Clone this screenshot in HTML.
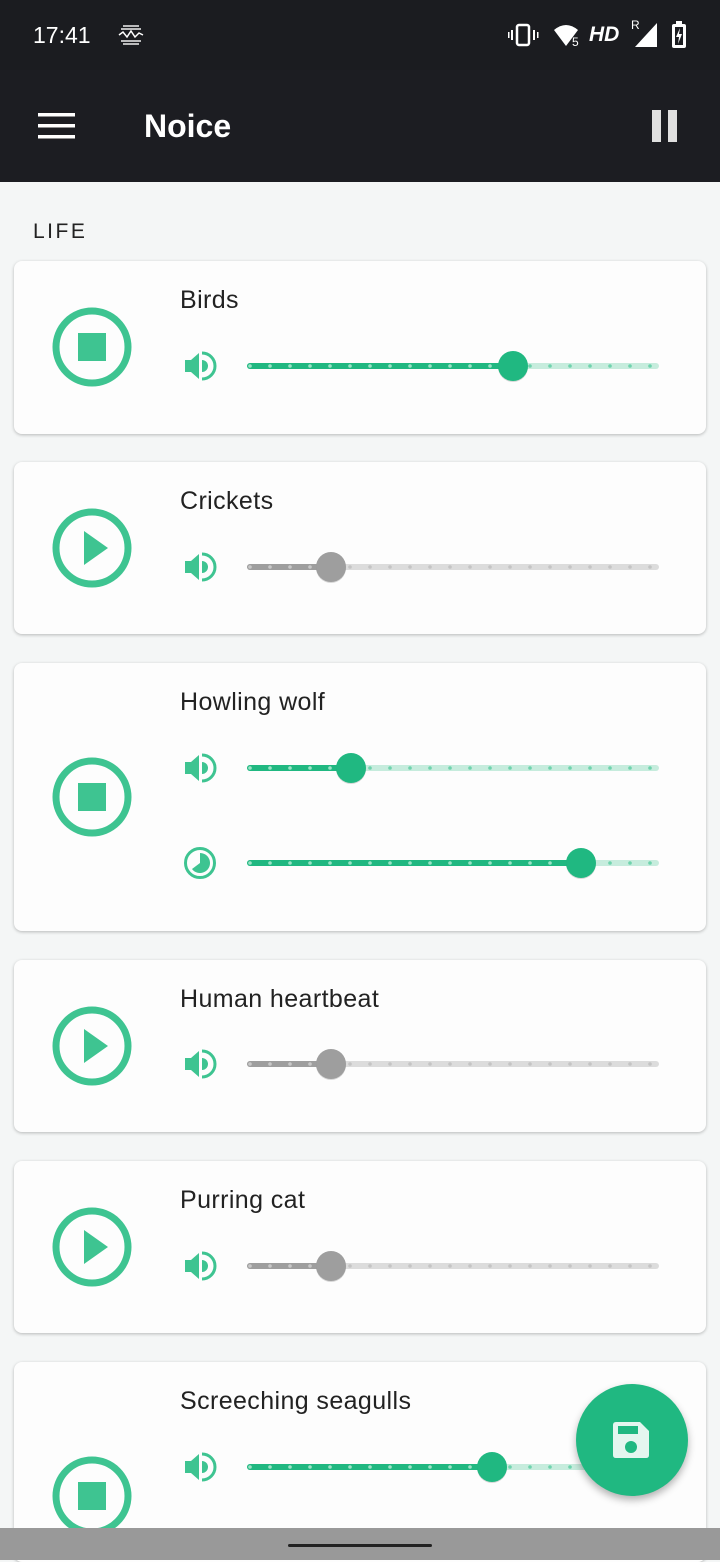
<!DOCTYPE html>
<html><head><meta charset="utf-8">
<style>
*{margin:0;padding:0;box-sizing:border-box}
body{width:720px;height:1560px;overflow:hidden;background:#f4f6f6;font-family:"Liberation Sans",sans-serif;position:relative}
.status{position:absolute;top:0;left:0;width:720px;height:70px;background:#1b1c20;color:#fff}
.bar{position:absolute;top:70px;left:0;width:720px;height:112px;background:#1c1d22;color:#fff}
.card{position:absolute;left:14px;width:692px;background:#fdfdfd;border-radius:8px;box-shadow:0 1px 3px rgba(0,0,0,.25)}
.title{position:absolute;left:166px;font-size:25px;letter-spacing:0.4px;color:#222}
svg{position:absolute;overflow:visible}
.nav{position:absolute;top:1528px;left:0;width:720px;height:32px;background:#999}
</style></head><body>
<div class="status">
  <div style="position:absolute;left:33px;top:22px;font-size:23px">17:41</div>
  <svg style="left:117px;top:22px" width="28" height="26"><g fill="none" stroke="#fff" stroke-width="1.5"><path d="M2 13 l4 -3 4 5 4 -6 4 6 4 -4 4 2"/></g><g fill="#fff"><rect x="6" y="3" width="16" height="2" opacity=".7"/><rect x="4" y="6" width="20" height="2" opacity=".7"/><rect x="4" y="18" width="20" height="2" opacity=".7"/><rect x="6" y="21" width="16" height="2" opacity=".7"/></g></svg>
  <svg style="left:508px;top:22px" width="32" height="26"><rect x="9" y="3" width="12" height="20" rx="2" fill="none" stroke="#fff" stroke-width="2.5"/><rect x="3" y="8" width="2" height="10" fill="#fff"/><rect x="25" y="8" width="2" height="10" fill="#fff"/><rect x="0" y="10" width="1.5" height="6" fill="#fff"/><rect x="29" y="10" width="1.5" height="6" fill="#fff"/></svg>
  <svg style="left:553px;top:22px" width="30" height="26"><path d="M1 8 Q13 -2 25 8 L13 24 Z" fill="#fff"/><text x="19" y="24" font-size="12" fill="#fff" font-family="Liberation Sans">5</text></svg>
  <div style="position:absolute;left:589px;top:23px;font-size:21px;font-weight:bold;font-style:italic">HD</div>
  <div style="position:absolute;left:631px;top:18px;font-size:12px">R</div>
  <svg style="left:634px;top:22px" width="24" height="26"><path d="M23 1 L23 25 L1 25 Z" fill="#fff"/></svg>
  <svg style="left:670px;top:20px" width="20" height="30"><rect x="6" y="1" width="6" height="4" fill="#fff"/><rect x="2" y="4" width="14" height="24" rx="2" fill="#fff"/><rect x="5" y="7" width="8" height="18" fill="#1b1c20"/><path d="M10 8 L6 17 H9 L8 24 L12 14 H9 Z" fill="#fff"/></svg>
</div>
<div class="bar">
  <svg style="left:38px;top:43px" width="37" height="26"><rect y="0" width="37" height="3.5" fill="#fff"/><rect y="11" width="37" height="3.5" fill="#fff"/><rect y="22" width="37" height="3.5" fill="#fff"/></svg>
  <div style="position:absolute;left:144px;top:38px;font-size:32px;font-weight:bold">Noice</div>
  <svg style="left:652px;top:40px" width="26" height="32"><rect x="0" y="0" width="9" height="32" fill="#e0e0e0"/><rect x="16" y="0" width="9" height="32" fill="#e0e0e0"/></svg>
</div>
<div style="position:absolute;left:33px;top:220px;font-size:21px;letter-spacing:2.5px;color:#222">LIFE</div>

<div class="card" style="top:261px;height:173px"></div>
<div class="card" style="top:462px;height:172px"></div>
<div class="card" style="top:663px;height:268px"></div>
<div class="card" style="top:960px;height:172px"></div>
<div class="card" style="top:1161px;height:172px"></div>
<div class="card" style="top:1362px;height:200px"></div>

<div class="title" style="top:286px;left:180px">Birds</div>
<div class="title" style="top:487px;left:180px">Crickets</div>
<div class="title" style="top:688px;left:180px">Howling wolf</div>
<div class="title" style="top:985px;left:180px">Human heartbeat</div>
<div class="title" style="top:1186px;left:180px">Purring cat</div>
<div class="title" style="top:1387px;left:180px">Screeching seagulls</div>

<div id="g"></div>
<div class="nav"><div style="position:absolute;left:288px;top:16px;width:144px;height:3px;border-radius:2px;background:#222"></div></div>
<div style="position:absolute;left:576px;top:1384px;width:112px;height:112px;border-radius:56px;background:#20b881;box-shadow:0 4px 8px rgba(0,0,0,.3)">
  <svg style="left:37px;top:38px" width="38" height="38"><path d="M3 0 H27 L36 9 V33 Q36 36 33 36 H3 Q0 36 0 33 V3 Q0 0 3 0 Z" fill="#e4f6ef"/><rect x="5" y="4" width="20" height="8" fill="#20b881"/><circle cx="18" cy="25" r="6" fill="#20b881"/></svg>
</div>
<script>
var G='#3ec491',D='#20b881';
var h='';
function btn(cy,stop){
  h+='<svg style="left:52px;top:'+(cy-40)+'px" width="80" height="80"><circle cx="40" cy="40" r="36" fill="none" stroke="'+G+'" stroke-width="7"/>'+
  (stop?'<rect x="26" y="26" width="28" height="28" fill="'+G+'"/>':'<path d="M32 23 L56 40 L32 57 Z" fill="'+G+'"/>')+'</svg>';
}
function vol(cy){
  h+='<svg style="left:183px;top:'+(cy-15)+'px" width="32" height="30"><path d="M2 9 H8 L16 2 V28 L8 21 H2 Z" fill="'+G+'"/><path d="M19 9 A6 6 0 0 1 19 21 Z" fill="'+G+'"/><path d="M19 2 A13 13 0 0 1 19 28" fill="none" stroke="'+G+'" stroke-width="3"/></svg>';
}
function timer(cy){
  h+='<svg style="left:183px;top:'+(cy-17)+'px" width="34" height="34"><circle cx="17" cy="17" r="14.5" fill="none" stroke="'+G+'" stroke-width="3"/><path d="M17 17 V7 A10 10 0 1 1 9 23 Z" fill="'+G+'"/></svg>';
}
function slider(cy,x,act){
  var c=act?D:'#9e9e9e',l=act?'#c6ecdd':'#dcdcdc',tk=act?'#6fd3ad':'#c4c4c4';
  var s='<svg style="left:246px;top:'+(cy-20)+'px" width="416" height="40">';
  s+='<line x1="4" y1="20" x2="410" y2="20" stroke="'+l+'" stroke-width="6" stroke-linecap="round"/>';
  s+='<line x1="4" y1="20" x2="'+(x-246)+'" y2="20" stroke="'+c+'" stroke-width="6" stroke-linecap="round"/>';
  for(var t=4;t<=410;t+=20){s+='<circle cx="'+t+'" cy="20" r="1.8" fill="'+(t<x-246?(act?'#9be3c6':'#c8c8c8'):tk)+'"/>';}
  s+='<circle cx="'+(x-246)+'" cy="21" r="15" fill="rgba(0,0,0,.15)"/><circle cx="'+(x-246)+'" cy="20" r="15" fill="'+c+'"/></svg>';
  h+=s;
}
btn(347,1);vol(366);slider(366,513,1);
btn(548,0);vol(567);slider(567,331,0);
btn(797,1);vol(768);slider(768,351,1);timer(863);slider(863,581,1);
btn(1046,0);vol(1064);slider(1064,331,0);
btn(1247,0);vol(1266);slider(1266,331,0);
btn(1496,1);vol(1467);slider(1467,492,1);
document.getElementById('g').innerHTML=h;
</script>
</body></html>
